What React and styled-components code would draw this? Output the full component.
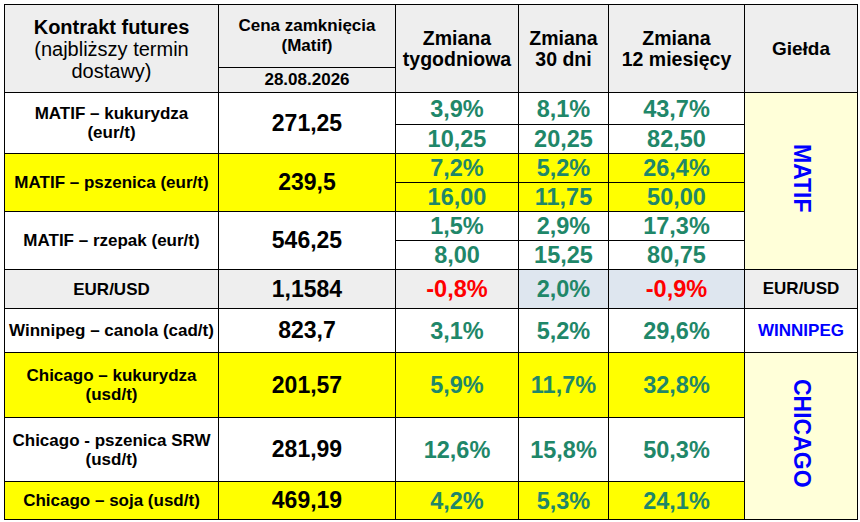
import React from "react";
import styled, { createGlobalStyle } from "styled-components";

const colors = {
  gray: "#eeeeee",
  blue: "#dee6ef",
  yellow: "#ffff00",
  pale: "#ffffd9",
  white: "#ffffff",
  green: "#1f8769",
  red: "#ff0000",
};

const GlobalStyle = createGlobalStyle`
  html, body {
    margin: 0;
    padding: 0;
    background: #ffffff;
  }
  body {
    font-family: "Liberation Sans", Arial, sans-serif;
    color: #000;
  }
`;

const Page = styled.div`
  padding: 4px 0 0 4px;
`;

const Table = styled.table`
  border-collapse: collapse;
  table-layout: fixed;
  width: 853px;
  font-family: "Liberation Sans", Arial, sans-serif;

  td {
    border: 1px solid #000;
    padding: 0;
    text-align: center;
    vertical-align: middle;
    white-space: nowrap;
  }
`;

const Row = styled.tr`
  height: ${(p) => p.$h}px;
`;

const HeadCell = styled.td`
  background: ${colors.gray};
  font-weight: 700;
  font-size: ${(p) => p.$size || 19.5}px;
  line-height: ${(p) => p.$lh || 21}px;
`;

const Light = styled.span`
  font-weight: 400;
`;

const LabelCell = styled.td`
  background: ${(p) => colors[p.$bg || "white"]};
  font-weight: 700;
  font-size: 17px;
  line-height: 19px;
`;

const PriceCell = styled.td`
  background: ${(p) => colors[p.$bg || "white"]};
  font-weight: 700;
  font-size: 23px;
`;

const ChangeCell = styled.td`
  background: ${(p) => colors[p.$bg || "white"]};
  color: ${(p) => (p.$neg ? colors.red : colors.green)};
  font-weight: 700;
  font-size: 23.5px;
  line-height: 26px;
`;

const ExchangeCell = styled.td`
  background: ${(p) => colors[p.$bg || "white"]};
  color: ${(p) => p.$color || "#000"};
  font-weight: 700;
  font-size: ${(p) => p.$size || 17}px;
`;

const Vertical = styled.span`
  display: inline-block;
  writing-mode: vertical-rl;
  line-height: 1;
`;

const matif = [
  { label: <>MATIF – kukurydza<br />(eur/t)</>, price: "271,25", bg: "white", h: [32, 29],
    pct: ["3,9%", "8,1%", "43,7%"], abs: ["10,25", "20,25", "82,50"] },
  { label: "MATIF – pszenica (eur/t)", price: "239,5", bg: "yellow", h: [29, 29],
    pct: ["7,2%", "5,2%", "26,4%"], abs: ["16,00", "11,75", "50,00"] },
  { label: "MATIF – rzepak (eur/t)", price: "546,25", bg: "white", h: [29, 29],
    pct: ["1,5%", "2,9%", "17,3%"], abs: ["8,00", "15,25", "80,75"] },
];

const chicago = [
  { label: <>Chicago – kukurydza<br />(usd/t)</>, price: "201,57", bg: "yellow", h: 65,
    pct: ["5,9%", "11,7%", "32,8%"] },
  { label: <>Chicago - pszenica SRW<br />(usd/t)</>, price: "281,99", bg: "white", h: 64,
    pct: ["12,6%", "15,8%", "50,3%"] },
  { label: "Chicago – soja (usd/t)", price: "469,19", bg: "yellow", h: 38,
    pct: ["4,2%", "5,3%", "24,1%"] },
];

export default function App() {
  return (
    <Page>
      <GlobalStyle />
      <Table>
        <colgroup>
          <col style={{ width: 214 }} />
          <col style={{ width: 177 }} />
          <col style={{ width: 123 }} />
          <col style={{ width: 90 }} />
          <col style={{ width: 136 }} />
          <col style={{ width: 113 }} />
        </colgroup>
        <tbody>
          <Row $h={63}>
            <HeadCell rowSpan={2} $size={20} $lh={22}>
              Kontrakt futures
              <br />
              <Light>(najbliższy termin</Light>
              <br />
              <Light>dostawy)</Light>
            </HeadCell>
            <HeadCell $size={17} $lh={20}>
              Cena zamknięcia
              <br />
              (Matif)
            </HeadCell>
            <HeadCell rowSpan={2}>
              Zmiana
              <br />
              tygodniowa
            </HeadCell>
            <HeadCell rowSpan={2}>
              Zmiana
              <br />
              30 dni
            </HeadCell>
            <HeadCell rowSpan={2}>
              Zmiana
              <br />
              12 miesięcy
            </HeadCell>
            <HeadCell rowSpan={2} $size={19}>
              Giełda
            </HeadCell>
          </Row>
          <Row $h={25}>
            <HeadCell $size={17} $lh={20}>
              28.08.2026
            </HeadCell>
          </Row>

          {matif.map((m, i) => (
            <React.Fragment key={m.price}>
              <Row $h={m.h[0]}>
                <LabelCell rowSpan={2} $bg={m.bg}>
                  {m.label}
                </LabelCell>
                <PriceCell rowSpan={2} $bg={m.bg}>
                  {m.price}
                </PriceCell>
                {m.pct.map((v, j) => (
                  <ChangeCell key={j} $bg={m.bg}>
                    {v}
                  </ChangeCell>
                ))}
                {i === 0 && (
                  <ExchangeCell rowSpan={6} $bg="pale" $color="#0000ff" $size={23}>
                    <Vertical>MATIF</Vertical>
                  </ExchangeCell>
                )}
              </Row>
              <Row $h={m.h[1]}>
                {m.abs.map((v, j) => (
                  <ChangeCell key={j} $bg={m.bg}>
                    {v}
                  </ChangeCell>
                ))}
              </Row>
            </React.Fragment>
          ))}

          <Row $h={39}>
            <LabelCell $bg="gray">EUR/USD</LabelCell>
            <PriceCell $bg="gray">1,1584</PriceCell>
            <ChangeCell $bg="gray" $neg>
              -0,8%
            </ChangeCell>
            <ChangeCell $bg="blue">2,0%</ChangeCell>
            <ChangeCell $bg="blue" $neg>
              -0,9%
            </ChangeCell>
            <ExchangeCell $bg="gray">EUR/USD</ExchangeCell>
          </Row>

          <Row $h={44}>
            <LabelCell>Winnipeg – canola (cad/t)</LabelCell>
            <PriceCell>823,7</PriceCell>
            <ChangeCell>3,1%</ChangeCell>
            <ChangeCell>5,2%</ChangeCell>
            <ChangeCell>29,6%</ChangeCell>
            <ExchangeCell $color="#0000ff">WINNIPEG</ExchangeCell>
          </Row>

          {chicago.map((c, i) => (
            <Row key={c.price} $h={c.h}>
              <LabelCell $bg={c.bg}>{c.label}</LabelCell>
              <PriceCell $bg={c.bg}>{c.price}</PriceCell>
              {c.pct.map((v, j) => (
                <ChangeCell key={j} $bg={c.bg}>
                  {v}
                </ChangeCell>
              ))}
              {i === 0 && (
                <ExchangeCell rowSpan={3} $bg="pale" $color="#0000ff" $size={23}>
                  <Vertical>CHICAGO</Vertical>
                </ExchangeCell>
              )}
            </Row>
          ))}
        </tbody>
      </Table>
    </Page>
  );
}
